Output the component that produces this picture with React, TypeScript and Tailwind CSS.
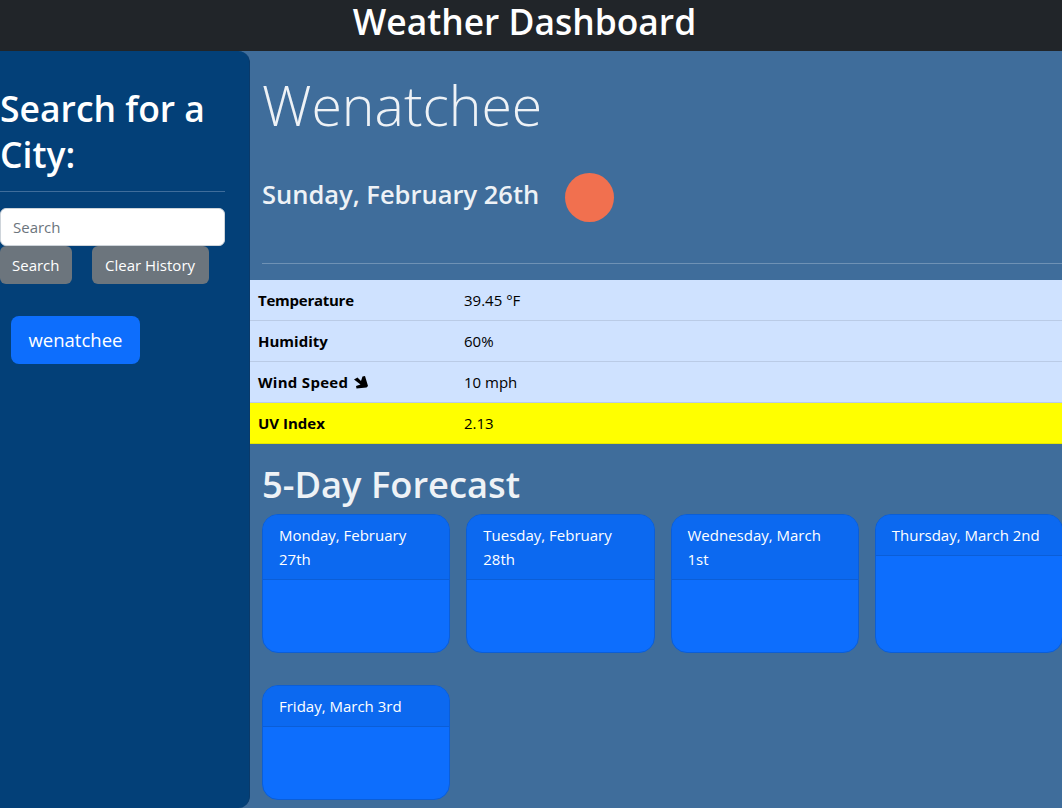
const forecast = [
  { date: "Monday, February 27th", tall: true },
  { date: "Tuesday, February 28th", tall: true },
  { date: "Wednesday, March 1st", tall: true },
  { date: "Thursday, March 2nd", tall: true },
  { date: "Friday, March 3rd", tall: false },
];

function WindArrow() {
  return (
    <svg viewBox="0 0 14 13" className="ml-[6px] inline-block h-[13px] w-[14px]" fill="black">
      <path d="M0 3.5 3.5 1.5 7 5 8.5 0.5 11 0 14 10 12.5 11.5 2.5 12.5 2 10 6.5 8.5Z" />
    </svg>
  );
}

export default function App() {
  return (
    <div className="h-screen overflow-hidden bg-[#3f6d9b] font-['Open_Sans',sans-serif] text-[16px] text-white">
      <header className="h-[51px] bg-[#212529] pr-[13px] text-center text-[35.4px] font-semibold leading-[43px]">
        Weather Dashboard
      </header>

      <div className="flex h-[757px]">
        <aside className="w-[250px] shrink-0 rounded-r-xl border-r border-[#0a3a6a] bg-[#034078]">
          <div className="w-[225px] pt-[34px]">
            <h2 className="text-[35.5px] font-semibold leading-[46px]">Search for a City:</h2>
            <hr className="mt-[14px] border-[#3f6d9b]" />
            <input
              placeholder="Search"
              className="mt-[16px] block h-[38px] w-full rounded-md border border-[#ced4da] bg-white px-3 text-[15px] text-black placeholder:text-[#6c757d]"
            />
            <div className="flex gap-5">
              <button className="h-[38px] rounded-md bg-[#6c757d] px-3 text-[15px]">Search</button>
              <button className="h-[38px] rounded-md bg-[#6c757d] px-[13.5px] text-[15px]">Clear History</button>
            </div>
          </div>
          <button className="ml-[11px] mt-[32px] h-[48px] rounded-lg bg-[#0d6efd] px-[17.5px] text-[18.5px]">wenatchee</button>
        </aside>

        <main className="min-w-0 flex-1">
          <div className="pl-3">
            <h1 className="pt-[18px] text-[55.4px] font-light leading-[72px] text-[#eef2f6]">Wenatchee</h1>
            <div className="mt-[32px] flex h-[49px] items-center">
              <h3 className="mb-[8px] text-[25.5px] font-semibold leading-[32px] text-[#eef2f6]">Sunday, February 26th</h3>
              <span className="ml-[26px] h-[49px] w-[49px] rounded-full bg-[#f1704f]" />
            </div>
            <hr className="mt-[41px] border-[#6f92b5]" />
          </div>

          <table className="mt-[16px] w-full border-separate border-spacing-0 text-[15px] text-black">
            <tbody>
              <tr className="h-[41px] bg-[#cfe2ff]">
                <th className="w-[214px] border-b border-[#bacbe6] pl-2 text-left font-bold tracking-[-0.25px]">Temperature</th>
                <td className="border-b border-[#bacbe6]">39.45 °F</td>
              </tr>
              <tr className="h-[41px] bg-[#cfe2ff]">
                <th className="border-b border-[#bacbe6] pl-2 text-left font-bold">Humidity</th>
                <td className="border-b border-[#bacbe6]">60%</td>
              </tr>
              <tr className="h-[41px] bg-[#cfe2ff]">
                <th className="border-b border-[#bacbe6] pl-2 text-left font-bold">
                  <span className="flex items-center tracking-[0.3px]">Wind Speed <WindArrow /></span>
                </th>
                <td className="border-b border-[#bacbe6]">10 mph</td>
              </tr>
              <tr className="h-[41px] bg-[#ffff00]">
                <th className="border-b border-[#e6e600] pl-2 text-left font-bold">UV Index</th>
                <td className="border-b border-[#e6e600]">2.13</td>
              </tr>
            </tbody>
          </table>

          <div className="pl-3">
            <h2 className="mt-[17px] text-[36.3px] font-semibold leading-[46px] text-[#eef2f6]">5-Day Forecast</h2>
            <div className="mt-[7px] grid w-[801px] grid-cols-4 gap-x-4 gap-y-8">
              {forecast.map((day) => (
                <div
                  key={day.date}
                  className={`overflow-hidden rounded-2xl border border-[#0b5ed7] bg-[#0d6efd] ${day.tall ? "h-[139px]" : "h-[115px]"}`}
                >
                  <div className="border-b border-[#0b5ed7] bg-[#0c69f0] py-2 pl-4 pr-4 text-[15px] leading-6">{day.date}</div>
                </div>
              ))}
            </div>
          </div>
        </main>
      </div>
    </div>
  );
}
